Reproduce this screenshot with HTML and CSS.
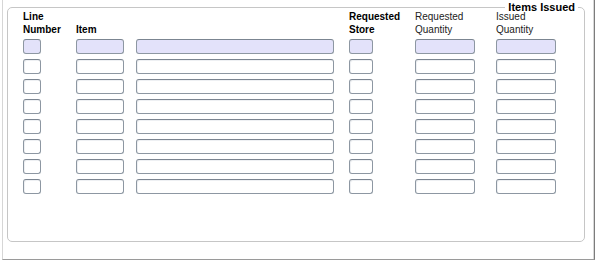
FILE: index.html
```html
<!DOCTYPE html>
<html lang="en">
  <head>
    <meta charset="UTF-8" />
    <title>Items Issued</title>
    <link rel="stylesheet" href="styles.css">
  </head>
  <body>
    <div class="panel">
      <fieldset class="group">
        <legend>Items Issued</legend>
        <div class="lines">
          <div class="head bold">Line<br>Number</div>
          <div class="head bold"><br>Item</div>
          <div class="head"></div>
          <div class="head bold">Requested<br>Store</div>
          <div class="head">Requested<br>Quantity</div>
          <div class="head">Issued<br>Quantity</div>
        </div>
      </fieldset>
    </div>

    <script>
      // build the 8 item rows, first one is the current record
      const grid = document.querySelector(".lines");
      const fields = ["line", "item", "desc", "store", "req-qty", "iss-qty"];

      for (let i = 0; i < 8; i++) {
        fields.forEach((name) => {
          const input = document.createElement("input");
          input.type = "text";
          input.className = "field " + name + (i === 0 ? " current" : "");
          grid.appendChild(input);
        });
      }
    </script>
  </body>
</html>
```

FILE: styles.css
```css
body {
  margin: 0;
  font-family: "Liberation Sans", Arial, sans-serif;
  font-size: 10px;
  background: #fff;
  color: #000;
}

.panel {
  margin-left: 2px;
  width: 593px;
  height: 260px;
  box-sizing: border-box;
  border-left: 1px solid #d6d6d6;
  border-right: 1px solid #7c7c7c;
  border-bottom: 1px solid #9a9a9a;
  box-shadow: inset -1px 0 0 #d8d8d8;
  padding-top: 1px;
}

.group {
  margin: 0 0 0 4px;
  padding: 0;
  width: 578px;
  height: 241px;
  box-sizing: border-box;
  border: 1px solid #c6c6c6;
  border-radius: 5px;
}

.group legend {
  margin-left: auto;
  margin-right: 6px;
  padding: 0 3px;
  font-size: 11px;
  font-weight: bold;
  line-height: 12px;
}

.lines {
  display: grid;
  grid-template-columns: 53px 60px 213px 66px 81px 60px;
  row-gap: 5px;
  margin-top: -3px;
  padding-left: 15px;
}

.head {
  line-height: 13px;
  height: 26px;
  margin-bottom: -2px;
  color: #222;
}

.head.bold {
  font-weight: bold;
  color: #000;
}

.field {
  height: 15px;
  margin: 0;
  padding: 0;
  box-sizing: border-box;
  border: 1px solid #8d97a2;
  border-top-color: #7b8591;
  border-radius: 3px;
  background: #fff;
  box-shadow: inset 1px 1px 0 #eef0f3;
  font: inherit;
}

.field.current {
  background: #e3e2fa;
  box-shadow: none;
}

.line { width: 18px; }
.item { width: 48px; }
.desc { width: 198px; }
.store { width: 24px; }
.req-qty { width: 60px; }
.iss-qty { width: 60px; }
```
